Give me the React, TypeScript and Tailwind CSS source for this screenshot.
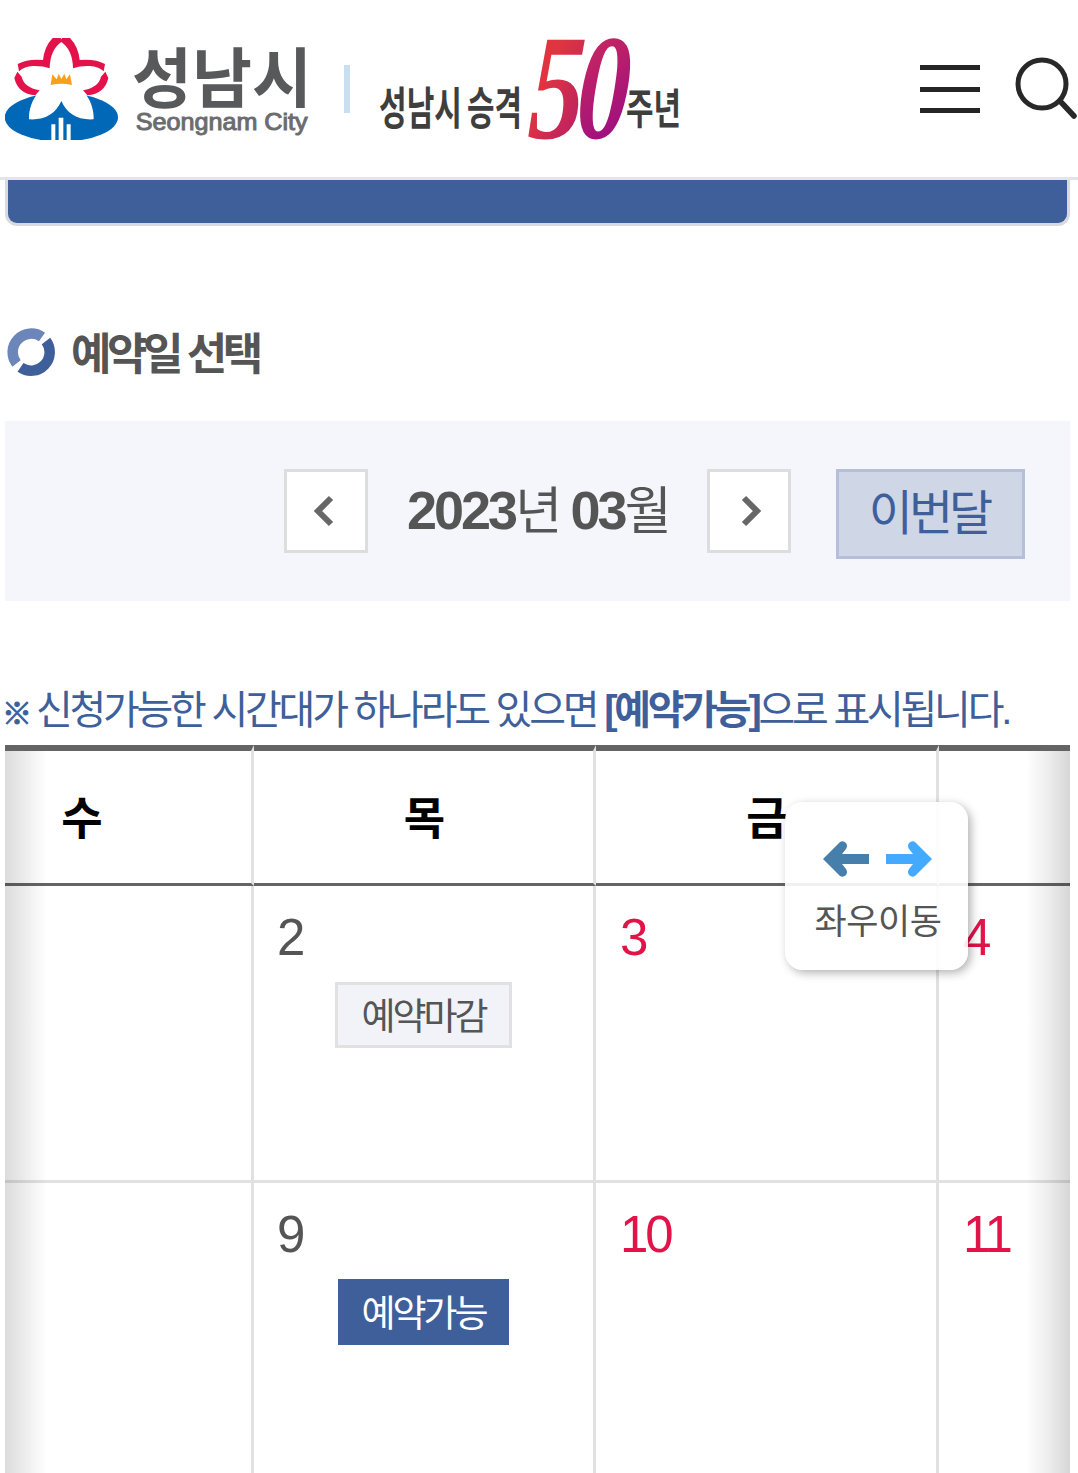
import React from "react";

type Day = {
  date?: string;
  holiday?: boolean;
  status?: "closed" | "open";
};

const weekdays = ["수", "목", "금", "토"];

const weeks: Day[][] = [
  [{}, { date: "2", status: "closed" }, { date: "3", holiday: true }, { date: "4", holiday: true }],
  [{}, { date: "9", status: "open" }, { date: "10", holiday: true }, { date: "11", holiday: true }],
];

function CityLogo() {
  return (
    <svg className="block h-[102px] w-[304px] shrink-0" viewBox="15 54 912 306" role="img" aria-label="성남시 Seongnam City">
      <ellipse cx="184" cy="292" rx="170" ry="73" fill="#0068b6" />
      <path
        d="M184 243C168 280 135 301 87 298C86 268 96 240 116 216C85 215 62 200 54 172L62 142C90 124 120 124 143 136C142 105 158 70 184 60C210 70 226 105 225 136C248 124 278 124 306 142L314 172C306 200 283 215 252 216C272 240 282 268 281 298C233 301 200 280 184 243Z"
        fill="#fff"
      />
      <g fill="#e4124b">
        <path d="M158 54H182L187 64Q150 88 149 145Q128 137 98 138Q74 139 57 154L53 132Q82 116 129 120Q133 80 158 54Z" />
        <path d="M210 54H186L181 64Q218 88 219 145Q240 137 270 138Q294 139 311 154L315 132Q286 116 239 120Q235 80 210 54Z" />
        <path d="M52 155L65 170Q72 202 119 211L106 226Q54 222 43 174Z" />
        <path d="M316 155L303 170Q296 202 249 211L262 226Q314 222 325 174Z" />
      </g>
      <path d="M152 195L157 163L170 178L176 161L184 177L193 161L199 178L210 163L216 195Q184 188 152 195Z" fill="#f8a01b" />
      <path d="M154 360V313H166V360ZM176 360V293H190V360ZM200 360V313H212V360Z" fill="#fff" />
      <text x="396" y="247" fontSize="196" fontWeight="700" fill="#58595b" textLength="540" lengthAdjust="spacingAndGlyphs" fontFamily="'Noto Sans CJK KR', sans-serif">
        성남시
      </text>
      <text x="407" y="331" fontSize="72" fill="#6b6c6e" stroke="#6b6c6e" strokeWidth="3" textLength="516" lengthAdjust="spacingAndGlyphs" fontFamily="'Liberation Sans', sans-serif">
        Seongnam City
      </text>
    </svg>
  );
}

function AnniversaryLogo() {
  return (
    <svg className="block h-[102px] w-[301px] shrink-0" viewBox="380 38 301 102" role="img" aria-label="성남시 승격 50주년">
      <defs>
        <linearGradient id="five" x1="0" y1="0" x2="0.8" y2="1">
          <stop offset="0.4" stopColor="#df3540" />
          <stop offset="1" stopColor="#b51c69" />
        </linearGradient>
        <linearGradient id="zero" x1="0" y1="0" x2="0.3" y2="1">
          <stop offset="0" stopColor="#d62f52" />
          <stop offset="1" stopColor="#9a0d84" />
        </linearGradient>
      </defs>
      <g fill="#3e3e3e" fontWeight="700" fontFamily="'Noto Sans CJK KR', sans-serif">
        <text x="379" y="125" fontSize="45" textLength="83" lengthAdjust="spacingAndGlyphs">성남시</text>
        <text x="467" y="125" fontSize="45" textLength="55" lengthAdjust="spacingAndGlyphs">승격</text>
        <text x="626" y="124" fontSize="42" textLength="55" lengthAdjust="spacingAndGlyphs">주년</text>
      </g>
      <g fontFamily="'Liberation Serif', serif" fontStyle="italic" fontWeight="700" fontSize="150">
        <text transform="translate(527 138) skewX(-3) scale(.74 1)" fill="url(#five)">5</text>
        <text transform="translate(575 138) skewX(-3) scale(.71 1)" fill="url(#zero)">0</text>
      </g>
    </svg>
  );
}

function Header() {
  return (
    <header className="flex h-[180px] items-start border-b-[3px] border-[#e3e4e9] bg-white pt-[38px] pl-[5px]">
      <CityLogo />
      <span className="mt-[27px] ml-[35px] h-12 w-1.5 shrink-0 bg-[#c9dff0]" />
      <div className="ml-[30px]">
        <AnniversaryLogo />
      </div>
      <button aria-label="메뉴" className="mt-[27px] ml-[239px] flex h-12 w-[60px] shrink-0 flex-col justify-between">
        <span className="h-[5px] w-full bg-[#252525]" />
        <span className="h-[5px] w-full bg-[#252525]" />
        <span className="h-[5px] w-full bg-[#252525]" />
      </button>
      <button aria-label="검색" className="mt-[19px] ml-[34px] shrink-0">
        <svg className="block h-16 w-16" viewBox="0 0 64 64" fill="none" stroke="#282828" strokeWidth="5">
          <circle cx="28" cy="27" r="24" />
          <path d="M46 44L60 59" strokeWidth="5.5" strokeLinecap="round" />
        </svg>
      </button>
    </header>
  );
}

function MonthButton({ direction }: { direction: "prev" | "next" }) {
  return (
    <button
      aria-label={direction === "prev" ? "이전달" : "다음달"}
      className="flex size-[84px] shrink-0 items-center justify-center border-[3px] border-[#dcdddd] bg-white"
    >
      <svg className="h-8 w-8" viewBox="0 0 32 32" fill="none" stroke="#676767" strokeWidth="6">
        {direction === "prev" ? <path d="M21 3L8 16L21 29" /> : <path d="M11 3L24 16L11 29" />}
      </svg>
    </button>
  );
}

function MonthNav() {
  return (
    <div className="mt-[43px] flex h-[180px] items-start bg-[#f5f6fb] pt-12 pl-[279px]">
      <MonthButton direction="prev" />
      <p className="ml-[39px] w-[300px] text-[54px] leading-[82px] tracking-[-3px] whitespace-nowrap text-[#555]">
        <b>2023</b>
        <span className="text-[51px] tracking-[-3.5px]">년</span> <b>03</b>
        <span className="text-[51px]">월</span>
      </p>
      <MonthButton direction="next" />
      <button className="ml-[45px] h-[90px] w-[189px] border-[3px] border-[#b5bfd9] bg-[#cfd6e6] pr-[3px] text-[48px] leading-[84px] tracking-[-4px] text-[#3f5f9b]">
        이번달
      </button>
    </div>
  );
}

function Badge({ status }: { status: "closed" | "open" }) {
  return status === "closed" ? (
    <span className="block h-[66px] w-[177px] border-[3px] border-[#e1e1e1] bg-[#f2f3f8] text-center text-[37px] leading-[65px] tracking-[-3px] text-[#555]">
      예약마감
    </span>
  ) : (
    <span className="block h-[66px] w-[171px] bg-[#3f5f9b] text-center text-[37px] leading-[71px] tracking-[-3px] text-white">예약가능</span>
  );
}

function DayCell({ day }: { day: Day }) {
  return (
    <div className="h-[297px] border-r-[3px] border-b-[3px] border-[#e1e1e1] pt-6">
      <div className={day.holiday ? "h-[72px] pl-6 text-[51px] leading-14 tracking-[-3px] text-[#e11349]" : "h-[72px] pl-[23px] text-[51px] leading-14 text-[#555]"}>
        {day.date}
      </div>
      {day.status && (
        <div className="flex justify-center">
          <Badge status={day.status} />
        </div>
      )}
    </div>
  );
}

function ScrollHint() {
  return (
    <div className="absolute top-[57px] left-[780px] flex h-[168px] w-[183px] flex-col items-center rounded-[18px] bg-white/90 pt-[37px] shadow-[3px_3px_10px_rgba(0,0,0,0.3)]">
      <svg className="h-10 w-[110px] shrink-0" viewBox="0 0 110 40">
        <path d="M1 20L18 3Q21 1 24 4Q26 7 24 10L20 15H47V25H20L24 30Q26 33 24 36Q21 39 18 37Z" fill="#477fac" />
        <path d="M110 20L93 3Q90 1 87 4Q85 7 87 10L91 15H64V25H91L87 30Q85 33 87 36Q90 39 93 37Z" fill="#43aaff" />
      </svg>
      <span className="mt-[17px] pl-[3px] text-[35px] leading-[52px] tracking-[-0.5px] whitespace-nowrap text-[#555]">좌우이동</span>
    </div>
  );
}

function Calendar() {
  return (
    <section className="relative h-[728px] overflow-hidden">
      <div className="-ml-[94px] grid w-[1370px] grid-cols-[343px_342px_343px_342px]">
        {weekdays.map((name) => (
          <div key={name} className="h-[141px] border-t-[6px] border-r-[3px] border-b-[3px] border-t-[#646464] border-r-[#e1e1e1] border-b-[#646464] pl-0.5 text-center text-[45px] leading-[138px] font-bold text-black">
            {name}
          </div>
        ))}
        {weeks.flat().map((day, i) => (
          <DayCell key={i} day={day} />
        ))}
      </div>
      <div className="pointer-events-none absolute top-1.5 bottom-0 left-0 w-[42px] bg-linear-to-r from-black/14 via-black/7 via-50% to-transparent" />
      <div className="pointer-events-none absolute top-1.5 right-0 bottom-0 w-[44px] bg-linear-to-l from-black/16 via-black/7 via-50% to-transparent" />
      <ScrollHint />
    </section>
  );
}

export default function App() {
  return (
    <div className="h-[1473px] w-[1078px] overflow-hidden bg-white font-['Liberation_Sans','Noto_Sans_CJK_KR',sans-serif]">
      <Header />
      <main className="ml-[5px] w-[1065px]">
        <div className="h-[46px] rounded-b-xl border-x-[3px] border-b-[3px] border-[#d9dadd] bg-[#3f5f9b]" />
        <h2 className="mt-[100px] flex h-[52px] items-center text-[44px] leading-[52px] font-bold tracking-[-4.5px] whitespace-nowrap text-[#555]">
          <svg className="mr-4 ml-0.5 h-12 w-12 shrink-0" viewBox="0 0 48 48" fill="none" strokeWidth="10.5">
            <path d="M9.5 35.5A18.6 18.6 0 0 1 35 9" stroke="#6c86b9" />
            <path d="M39 13A18.6 18.6 0 0 1 13.5 39.4" stroke="#3f5f9b" />
          </svg>
          <span className="pt-[5px]">예약일 선택</span>
        </h2>
        <MonthNav />
        <p className="mt-[82px] h-[62px] text-[40px] leading-[54px] tracking-[-3.25px] whitespace-nowrap text-[#3f5f9b]">
          <span className="-ml-[3px] text-[30px] font-bold tracking-[-4px] [-webkit-text-stroke:1px_#3f5f9b]">※</span>{" "}
          신청가능한 시간대가 하나라도 있으면 <b>[예약가능]</b>으로 표시됩니다.
        </p>
        <Calendar />
      </main>
    </div>
  );
}
